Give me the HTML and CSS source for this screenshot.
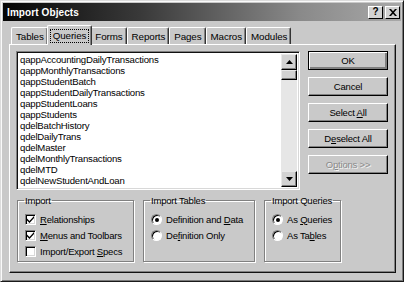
FILE: index.html
```html
<!DOCTYPE html>
<html lang="en">
<head>
  <meta charset="UTF-8">
  <title>Import Objects</title>
  <link rel="stylesheet" href="styles.css">
</head>
<body>
  <div class="window">
    <div class="titlebar">
      <span class="title">Import Objects</span>
      <div class="title-buttons">
        <span class="tbtn help">?</span>
        <span class="tbtn">
          <svg width="8" height="7" viewBox="0 0 8 7"><path d="M0 0h2l2 2.3L6 0h2L5 3.5 8 7H6L4 4.7 2 7H0l3-3.5z" fill="#000"/></svg>
        </span>
      </div>
    </div>

    <div class="tabs">
      <span class="tab">Tables</span>
      <span class="tab active"><span class="focus">Queries</span></span>
      <span class="tab">Forms</span>
      <span class="tab">Reports</span>
      <span class="tab">Pages</span>
      <span class="tab">Macros</span>
      <span class="tab">Modules</span>
    </div>

    <div class="panel">
      <div class="top">
        <div class="listbox">
          <ul class="items">
            <li>qappAccountingDailyTransactions</li>
            <li>qappMonthlyTransactions</li>
            <li>qappStudentBatch</li>
            <li>qappStudentDailyTransactions</li>
            <li>qappStudentLoans</li>
            <li>qappStudents</li>
            <li>qdelBatchHistory</li>
            <li>qdelDailyTrans</li>
            <li>qdelMaster</li>
            <li>qdelMonthlyTransactions</li>
            <li>qdelMTD</li>
            <li>qdelNewStudentAndLoan</li>
          </ul>
          <div class="scrollbar">
            <span class="arrow"><svg width="7" height="4" viewBox="0 0 7 4"><path d="M3.5 0L7 4H0z" fill="#000"/></svg></span>
            <span class="thumb"></span>
            <span class="track"></span>
            <span class="arrow"><svg width="7" height="4" viewBox="0 0 7 4"><path d="M0 0h7L3.5 4z" fill="#000"/></svg></span>
          </div>
        </div>
        <div class="actions">
          <span class="button default"><span>OK</span></span>
          <span class="button"><span>Cancel</span></span>
          <span class="button"><span>Select <u>A</u>ll</span></span>
          <span class="button"><span>D<u>e</u>select All</span></span>
          <span class="button disabled"><span>O<u>p</u>tions &gt;&gt;</span></span>
        </div>
      </div>

      <div class="groups">
        <fieldset class="group g-import">
          <legend>Import</legend>
          <div class="option"><span class="check"><svg width="7" height="7" viewBox="0 0 7 7"><path d="M0 2.5l2.5 2.5L7 0v2L2.5 7 0 4.5z" fill="#000"/></svg></span><span><u>R</u>elationships</span></div>
          <div class="option"><span class="check"><svg width="7" height="7" viewBox="0 0 7 7"><path d="M0 2.5l2.5 2.5L7 0v2L2.5 7 0 4.5z" fill="#000"/></svg></span><span><u>M</u>enus and Toolbars</span></div>
          <div class="option"><span class="check"></span><span>Import/Export <u>S</u>pecs</span></div>
        </fieldset>
        <fieldset class="group g-tables">
          <legend>Import Tables</legend>
          <div class="option"><span class="radio on"></span><span>Definition and <u>D</u>ata</span></div>
          <div class="option"><span class="radio"></span><span>De<u>f</u>inition Only</span></div>
        </fieldset>
        <fieldset class="group g-queries">
          <legend>Import Queries</legend>
          <div class="option"><span class="radio on"></span><span>As <u>Q</u>ueries</span></div>
          <div class="option"><span class="radio"></span><span>As Ta<u>b</u>les</span></div>
        </fieldset>
      </div>
    </div>
  </div>
</body>
</html>
```

FILE: styles.css
```css
body {
  margin: 0;
  background: #c9c9c9;
  font-family: "Liberation Sans", Arial, sans-serif;
  font-size: 9.5px;
  letter-spacing: -0.2px;
  color: #000;
}
u {
  text-decoration: underline;
  text-underline-offset: 1px;
}
.window {
  width: 404px;
  height: 282px;
  box-sizing: border-box;
  background: #c9c9c9;
  border: 1px solid;
  border-color: #dcdcdc #1a1a1a #1a1a1a #dcdcdc;
  box-shadow: inset 1px 1px 0 #fafafa, inset -1px -1px 0 #7a7a7a;
  padding: 2px;
}
.titlebar {
  height: 18px;
  display: flex;
  align-items: center;
  justify-content: space-between;
  padding: 0 1px 0 4px;
  background: linear-gradient(90deg, #050505 0%, #3a3a3a 35%, #8a8a8a 75%, #a8a8a8 100%);
}
.title {
  color: #fff;
  font-weight: bold;
  font-size: 10px;
  letter-spacing: 0.1px;
}
.title-buttons {
  display: flex;
  gap: 2px;
}
.tbtn {
  width: 13px;
  height: 11px;
  display: flex;
  align-items: center;
  justify-content: center;
  background: #d2d2d2;
  border: 1px solid;
  border-color: #fff #000 #000 #fff;
  font-weight: bold;
  font-size: 10px;
  line-height: 1;
}
.tabs {
  display: flex;
  align-items: flex-end;
  margin: 3px 0 0 8px;
  height: 20px;
  font-size: 9.8px;
  letter-spacing: -0.1px;
}
.tab {
  height: 16px;
  display: flex;
  align-items: center;
  padding: 0 3px 0 4px;
  border: 1px solid;
  border-color: #fff #333 transparent #fff;
  border-bottom: none;
  border-radius: 2px 2px 0 0;
  box-shadow: inset -1px 0 0 #808080;
}
.tab.active {
  height: 19px;
  margin: 0 -2px -1px -1px;
  padding: 0 3px;
  position: relative;
  z-index: 1;
  background: #c9c9c9;
}
.focus {
  outline: 1px dotted #000;
  padding: 0 2px;
  line-height: 12px;
}
.panel {
  margin: 0 5px 0 6px;
  height: 229px;
  box-sizing: border-box;
  border: 1px solid;
  border-color: #fff #111 #111 #fff;
  box-shadow: inset -1px -1px 0 #808080;
  padding: 6px 7px 0 6px;
}
.top {
  display: flex;
  gap: 8px;
}
.listbox {
  width: 286px;
  height: 139px;
  box-sizing: border-box;
  display: flex;
  background: #fff;
  border: 1px solid;
  border-color: #808080 #fff #fff #808080;
  box-shadow: inset 1px 1px 0 #111, inset -1px -1px 0 #d8d8d8;
  padding: 2px;
}
.items {
  flex: 1;
  list-style: none;
  margin: 0;
  padding: 0 0 0 1px;
  font-size: 9.6px;
  letter-spacing: -0.2px;
}
.items li {
  height: 11px;
  line-height: 11px;
  white-space: nowrap;
}
.scrollbar {
  width: 16px;
  display: flex;
  flex-direction: column;
  background: #e6e6e6;
}
.arrow,
.thumb {
  height: 14px;
  display: flex;
  align-items: center;
  justify-content: center;
  background: #d2d2d2;
  border: 1px solid;
  border-color: #e8e8e8 #000 #000 #e8e8e8;
  box-shadow: inset -1px -1px 0 #808080;
}
.thumb {
  height: 8px;
}
.track {
  flex: 1;
}
.actions {
  display: flex;
  flex-direction: column;
  gap: 7px;
}
.button {
  width: 80px;
  height: 19px;
  box-sizing: border-box;
  display: flex;
  align-items: center;
  justify-content: center;
  border: 1px solid;
  border-color: #fff #000 #000 #fff;
  box-shadow: inset -1px -1px 0 #808080;
}
.button.default {
  border: 1px solid #000;
  box-shadow: inset 1px 1px 0 #fff, inset -2px -2px 0 #808080;
}
.button.disabled {
  color: #8a8a8a;
  text-shadow: 1px 1px 0 #f4f4f4;
}
.groups {
  display: flex;
  gap: 9px;
  margin-top: 5px;
  margin-left: 1px;
}
.group {
  margin: 0;
  height: 67px;
  box-sizing: border-box;
  padding: 7px 0 0 7px;
  border: 1px solid #808080;
  box-shadow: 1px 1px 0 #fff, inset 1px 1px 0 #fff;
  display: flex;
  flex-direction: column;
  gap: 4px;
}
.group legend {
  padding: 0 1px;
  margin-left: -1px;
}
.g-import { width: 117px; }
.g-tables { width: 112px; }
.g-queries { width: 77px; }
.option {
  display: flex;
  align-items: center;
  gap: 4px;
  height: 12px;
  white-space: nowrap;
}
.check {
  width: 11px;
  height: 11px;
  box-sizing: border-box;
  display: flex;
  align-items: center;
  justify-content: center;
  background: #fff;
  border: 1px solid;
  border-color: #808080 #fff #fff #808080;
  box-shadow: inset 1px 1px 0 #000, inset -1px -1px 0 #d8d8d8;
}
.radio {
  width: 11px;
  height: 11px;
  box-sizing: border-box;
  border-radius: 50%;
  background: #fff;
  border: 1px solid;
  border-color: #808080 #fff #fff #808080;
  box-shadow: inset 1px 1px 0 #000;
  position: relative;
}
.radio.on::after {
  content: "";
  position: absolute;
  left: 3px;
  top: 3px;
  width: 4px;
  height: 4px;
  border-radius: 50%;
  background: #000;
}
```
